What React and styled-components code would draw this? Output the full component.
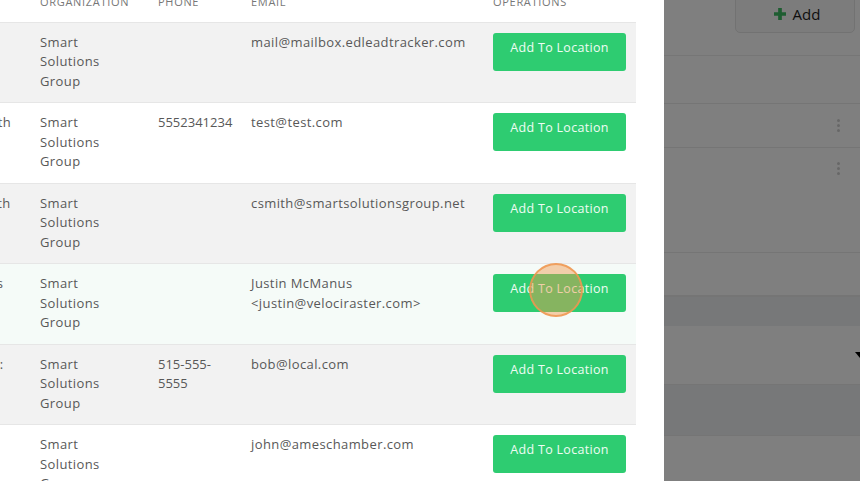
import React from "react";
import styled, { createGlobalStyle } from "styled-components";

const GlobalStyle = createGlobalStyle`
  html, body { margin: 0; padding: 0; height: 100%; overflow: hidden; }
  body { font-family: "Open Sans", "Noto Sans", sans-serif; background: #fff; }
  * { box-sizing: border-box; }
`;

/* ---------- background page (dimmed) ---------- */
const Page = styled.div`
  height: 481px;
  display: flex;
  flex-direction: column;
  background: #fff;
`;
const TopBar = styled.div`
  height: 56px;
  flex: none;
  display: flex;
  justify-content: flex-end;
  align-items: flex-start;
  padding-right: 5px;
  border-bottom: 1px solid #ececec;
`;
const AddButton = styled.button`
  margin-top: -6px;
  width: 120px;
  height: 39px;
  display: flex;
  align-items: center;
  justify-content: center;
  gap: 7px;
  padding: 0 0 0 4px;
  border: 1px solid #e4e4e4;
  border-radius: 5px;
  background: #f9f9f9;
  font-family: "Open Sans", sans-serif;
  font-size: 15px;
  color: #1e1e1e;
`;
const Section = styled.div`
  height: ${(p) => p.$h}px;
  flex: none;
  display: flex;
  justify-content: flex-end;
  align-items: ${(p) => (p.$top ? "flex-start" : "center")};
  padding: ${(p) => (p.$top ? "14px 20px 0 0" : "0 20px 0 0")};
  background: ${(p) => (p.$shade ? "#eef0f3" : "#fff")};
  border-bottom: ${(p) => p.$border ?? 1}px solid #ebebeb;
  position: relative;
`;
const Kebab = styled.div`
  display: flex;
  flex-direction: column;
  gap: 2px;
  span {
    width: 3px;
    height: 3px;
    border-radius: 50%;
    background: #cfcfcf;
  }
`;
const Caret = styled.div`
  position: absolute;
  left: 855px;
  top: 26px;
  width: 0;
  height: 0;
  border-left: 5px solid transparent;
  border-right: 5px solid transparent;
  border-top: 6px solid #000;
`;
const Overlay = styled.div`
  position: fixed;
  inset: 0;
  background: rgba(0, 0, 0, 0.5);
`;

/* ---------- modal ---------- */
const Modal = styled.div`
  position: fixed;
  top: -18px;
  left: -80px;
  width: 744px;
  bottom: -40px;
  background: #fff;
  padding-right: 28px;
  overflow: hidden;
`;
const Row = styled.div`
  display: grid;
  grid-template-columns: 110px 118px 93px 242px 153px;
  border-bottom: 1px solid #e6e6e6;
  background: ${(p) =>
    p.$variant === "stripe" ? "#f2f2f2" : p.$variant === "hover" ? "#f5fbf8" : "#fff"};
`;
const HeadCell = styled.div`
  padding: 10px 10px 10px;
  font-size: 11px;
  line-height: 19.5px;
  letter-spacing: 0.7px;
  text-transform: uppercase;
  color: #777;
`;
const Cell = styled.div`
  padding: 10px 10px 11px;
  font-size: 13px;
  line-height: 19.5px;
  letter-spacing: ${(p) => p.$ls ?? 0.4}px;
  color: #585858;
  min-height: 79.5px;
  white-space: normal;
  overflow-wrap: normal;
  span { display: block; max-width: ${(p) => p.$max || 300}px; }
`;
const LocationButton = styled.button`
  width: 133px;
  height: 38px;
  padding: 5px 0 0;
  display: flex;
  justify-content: center;
  align-items: flex-start;
  border: none;
  border-radius: 3px;
  background: #2ecc71;
  color: #effcf4;
  font-family: "Open Sans", sans-serif;
  font-size: 12.5px;
  line-height: 19.5px;
  letter-spacing: 0.3px;
`;
const ClickMark = styled.div`
  position: fixed;
  left: 529px;
  top: 263px;
  width: 54px;
  height: 54px;
  border-radius: 50%;
  background: rgba(242, 150, 75, 0.45);
  border: 2px solid rgba(238, 150, 80, 0.85);
`;

const rows = [
  { name: "", phone: "", email: "mail@mailbox.edleadtracker.com", v: "stripe" },
  { name: "Tester Smith", phone: "5552341234", email: "test@test.com", v: "plain" },
  { name: "Carlas Smith", phone: "", email: "csmith@smartsolutionsgroup.net", v: "stripe" },
  { name: "Justin Muss", phone: "", email: "Justin McManus <justin@velociraster.com>", v: "hover" },
  { name: "Bobby Bob:", phone: "515-555-5555", email: "bob@local.com", v: "stripe" },
  { name: "John Jollyl", phone: "", email: "john@ameschamber.com", v: "plain" },
];

export default function App() {
  return (
    <>
      <GlobalStyle />
      <Page>
        <TopBar>
          <AddButton>
            <svg width="12" height="12" viewBox="0 0 13 13">
              <path d="M4.5 0h4v4.5H13v4H8.5V13h-4V8.5H0v-4h4.5z" fill="#3dbb63" />
            </svg>
            Add
          </AddButton>
        </TopBar>
        <Section $h={48} />
        <Section $h={44}>
          <Kebab><span /><span /><span /></Kebab>
        </Section>
        <Section $h={105} $top>
          <Kebab><span /><span /><span /></Kebab>
        </Section>
        <Section $h={44} $border={2} />
        <Section $h={29} $shade $border={0} />
        <Section $h={59}>
          <Caret />
        </Section>
        <Section $h={51} $shade />
        <Section $h={60} />
      </Page>
      <Overlay />
      <Modal>
        <Row>
          <HeadCell>Name</HeadCell>
          <HeadCell>Organization</HeadCell>
          <HeadCell>Phone</HeadCell>
          <HeadCell>Email</HeadCell>
          <HeadCell>Operations</HeadCell>
        </Row>
        {rows.map((r, i) => (
          <Row key={i} $variant={r.v}>
            <Cell>{r.name}</Cell>
            <Cell $max={90}><span>Smart Solutions Group</span></Cell>
            <Cell $max={73} $ls={0}><span>{r.phone}</span></Cell>
            <Cell $max={222}><span>{r.email}</span></Cell>
            <Cell>
              <LocationButton>Add To Location</LocationButton>
            </Cell>
          </Row>
        ))}
      </Modal>
      <ClickMark />
    </>
  );
}
